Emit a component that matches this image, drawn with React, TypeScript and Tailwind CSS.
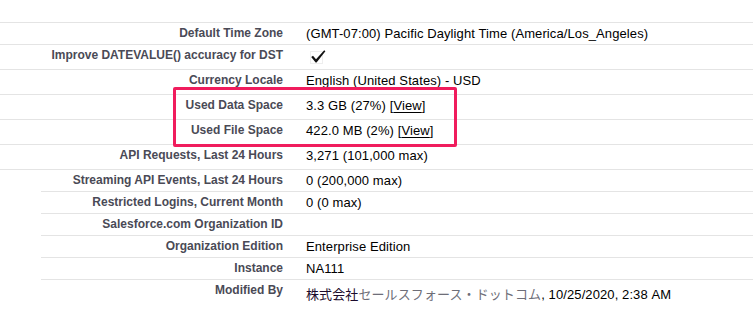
import React from "react";

type Row = {
  label: string;
  value: React.ReactNode;
  h: string;
  indent?: boolean;
  valuePad?: string;
};

function Check() {
  return (
    <svg width="24" height="20" viewBox="0 0 24 20" className="block">
      <rect x="4.5" y="6.5" width="12" height="12" fill="none" stroke="#dcdcdc" strokeWidth="1" strokeDasharray="1 1" />
      <path d="M5.2 12 L7 10.8 L10 14.2 L18.2 5.2 L19.4 6.2 L10.6 17.6 L9.6 17.6 Z" fill="#111" />
    </svg>
  );
}

function View() {
  return (
    <span>
      [<span className="underline underline-offset-2">View</span>]
    </span>
  );
}

const rows: Row[] = [
  { label: "Default Time Zone", value: "(GMT-07:00) Pacific Daylight Time (America/Los_Angeles)", h: "h-[22px]" },
  { label: "Improve DATEVALUE() accuracy for DST", value: <Check />, h: "h-[25px]", valuePad: "pt-0" },
  { label: "Currency Locale", value: "English (United States) - USD", h: "h-[25px]" },
  { label: "Used Data Space", value: <span>3.3 GB (27%) <View /></span>, h: "h-[25px]" },
  { label: "Used File Space", value: <span>422.0 MB (2%) <View /></span>, h: "h-[25px]" },
  { label: "API Requests, Last 24 Hours", value: "3,271 (101,000 max)", h: "h-[25px]" },
  { label: "Streaming API Events, Last 24 Hours", value: "0 (200,000 max)", h: "h-[22px]" },
  { label: "Restricted Logins, Current Month", value: "0 (0 max)", h: "h-[22px]", indent: true },
  { label: "Salesforce.com Organization ID", value: "", h: "h-[22px]", indent: true },
  { label: "Organization Edition", value: "Enterprise Edition", h: "h-[22px]", indent: true },
  { label: "Instance", value: "NA111", h: "h-[22px]", indent: true },
  {
    label: "Modified By",
    value: (
      <span>
        <span className="text-[#1c0b2c] font-['Noto_Sans_CJK_JP',sans-serif]">株式会社</span>
        <span className="text-[#6e6e78] font-['Noto_Sans_CJK_JP',sans-serif]">セールスフォース・ドットコム</span>
        <span>, 10/25/2020, 2:38 AM</span>
      </span>
    ),
    h: "h-[46px]",
    indent: true,
    valuePad: "pt-[6px]",
  },
];

export default function App() {
  return (
    <div className="relative w-[753px] h-[325px] bg-white overflow-hidden font-['Liberation_Sans',Arial,sans-serif]">
      <div className="h-[22px]" />
      {rows.map((r, i) => (
        <div
          key={i}
          className={`flex ${r.h} border-t border-[#e4e4e4] ${r.indent ? "ml-[41px]" : ""}`}
        >
          <div
            className={`${r.indent ? "w-[242px]" : "w-[283px]"} shrink-0 text-right text-[12px] leading-[14px] font-bold text-[#4a4a56] pt-[3px] whitespace-nowrap`}
          >
            {r.label}
          </div>
          <div className={`pl-[23px] text-[13px] leading-[15px] tracking-[0.1px] text-black whitespace-nowrap ${r.valuePad ?? "pt-[3px]"}`}>
            {r.value}
          </div>
        </div>
      ))}
      <div className="absolute left-[173px] top-[87px] w-[284px] h-[60px] border-[3px] border-[#f01c5d] rounded-[2px]" />
    </div>
  );
}
